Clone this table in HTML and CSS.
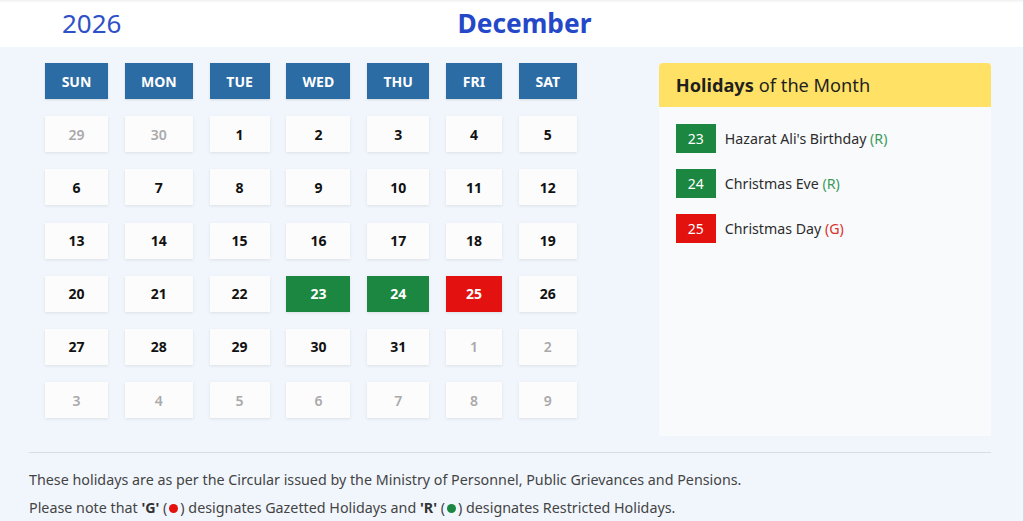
FILE: index.html
```html
<!DOCTYPE html>
<html lang="en">
<head>
<meta charset="utf-8">
<title>Holidays December 2026</title>
<link rel="stylesheet" href="styles.css">
</head>
<body>
<header class="top">
  <span class="year">2026</span>
  <span class="month">December</span>
</header>
<main class="main">
  <div class="content">
    <section class="calendar">
      <div class="dow">SUN</div><div class="dow">MON</div><div class="dow">TUE</div><div class="dow">WED</div><div class="dow">THU</div><div class="dow">FRI</div><div class="dow">SAT</div>
      <div class="day other">29</div><div class="day other">30</div><div class="day">1</div><div class="day">2</div><div class="day">3</div><div class="day">4</div><div class="day">5</div>
      <div class="day">6</div><div class="day">7</div><div class="day">8</div><div class="day">9</div><div class="day">10</div><div class="day">11</div><div class="day">12</div>
      <div class="day">13</div><div class="day">14</div><div class="day">15</div><div class="day">16</div><div class="day">17</div><div class="day">18</div><div class="day">19</div>
      <div class="day">20</div><div class="day">21</div><div class="day">22</div><div class="day restricted">23</div><div class="day restricted">24</div><div class="day gazetted">25</div><div class="day">26</div>
      <div class="day">27</div><div class="day">28</div><div class="day">29</div><div class="day">30</div><div class="day">31</div><div class="day other">1</div><div class="day other">2</div>
      <div class="day other">3</div><div class="day other">4</div><div class="day other">5</div><div class="day other">6</div><div class="day other">7</div><div class="day other">8</div><div class="day other">9</div>
    </section>
    <aside class="panel">
      <div class="panel-head"><b>Holidays</b> of the Month</div>
      <ul class="list">
        <li class="item"><span class="badge green">23</span><span class="name">Hazarat Ali's Birthday <span class="tag-r">(R)</span></span></li>
        <li class="item"><span class="badge green">24</span><span class="name">Christmas Eve <span class="tag-r">(R)</span></span></li>
        <li class="item"><span class="badge red">25</span><span class="name">Christmas Day <span class="tag-g">(G)</span></span></li>
      </ul>
    </aside>
  </div>
  <footer class="notes">
    <p>These holidays are as per the Circular issued by the Ministry of Personnel, Public Grievances and Pensions.</p>
    <p>Please note that <b>'G'</b> (<span class="dot red-dot"></span>) designates Gazetted Holidays and <b>'R'</b> (<span class="dot green-dot"></span>) designates Restricted Holidays.</p>
  </footer>
</main>
</body>
</html>
```

FILE: styles.css
```css
html, body {
  margin: 0;
  padding: 0;
}
body {
  font-family: "Noto Sans", "Open Sans", sans-serif;
  background: #f1f6fd;
  width: 1023px;
  height: 521px;
  overflow: hidden;
  border-right: 1px solid #d6d9de;
}
.top {
  height: 47px;
  background: #ffffff;
  display: flex;
  align-items: center;
  box-shadow: inset 0 3px 3px -2px rgba(0,0,0,0.08);
  box-sizing: border-box;
  padding-bottom: 2px;
}
.year {
  margin-left: 62px;
  font-size: 26px;
  color: #2f50c6;
  font-weight: 400;
}
.month {
  margin-left: 336px;
  font-size: 26.3px;
  font-weight: 700;
  color: #2448c8;
}
.main {
  padding: 16px 32px 0 29px;
}
.content {
  display: flex;
  align-items: flex-start;
}
.calendar {
  margin-left: 16px;
  display: grid;
  grid-template-columns: 63px 68px 60px 64px 62px 56px 58px;
  grid-auto-rows: 36px;
  column-gap: 16.8px;
  row-gap: 17.2px;
}
.dow {
  background: #2c6ca4;
  color: #ffffff;
  font-size: 14px;
  font-weight: 700;
  display: flex;
  align-items: center;
  justify-content: center;
  box-shadow: 0 1px 2px rgba(0,0,0,0.12);
}
.day {
  background: #fcfcfc;
  color: #111111;
  font-size: 14px;
  font-weight: 700;
  display: flex;
  align-items: center;
  justify-content: center;
  box-shadow: 0 1px 3px rgba(0,0,0,0.09);
}
.day.other {
  color: #a9a9ab;
  font-weight: 600;
}
.day.restricted {
  background: #1b8741;
  color: #ffffff;
}
.day.gazetted {
  background: #e3110f;
  color: #ffffff;
}
.panel {
  margin-left: 82px;
  width: 332px;
  height: 373px;
  background: #f9fafc;
  border-radius: 4px 4px 0 0;
}
.panel-head {
  height: 44px;
  background: #ffe265;
  border-radius: 4px 4px 0 0;
  display: flex;
  align-items: center;
  padding-left: 17px;
  font-size: 18.2px;
  color: #1f1f1f;
}
.panel-head b {
  font-weight: 700;
  margin-right: 5px;
}
.list {
  list-style: none;
  margin: 0;
  padding: 17px 0 0 17px;
  display: flex;
  flex-direction: column;
  gap: 16px;
}
.item {
  display: flex;
  align-items: center;
  height: 29px;
}
.badge {
  width: 40px;
  height: 29px;
  display: flex;
  align-items: center;
  justify-content: center;
  color: #ffffff;
  font-size: 14px;
}
.badge.green { background: #1b8741; }
.badge.red { background: #e3120f; }
.name {
  margin-left: 9px;
  font-size: 14.2px;
  color: #2c2c2c;
}
.tag-r { color: #3d9a5c; }
.tag-g { color: #d9342c; }
.notes {
  margin-top: 16px;
  border-top: 1px solid #dadde2;
  padding-top: 17px;
}
.notes p {
  margin: 0 0 8px 0;
  font-size: 14.3px;
  line-height: 20px;
  color: #444444;
}
.notes b {
  font-weight: 700;
  color: #333333;
}
.dot {
  display: inline-block;
  width: 9px;
  height: 9px;
  margin: 0 2px;
  border-radius: 50%;
  vertical-align: 0;
}
.red-dot { background: #e3120f; }
.green-dot { background: #1b8741; }
```
